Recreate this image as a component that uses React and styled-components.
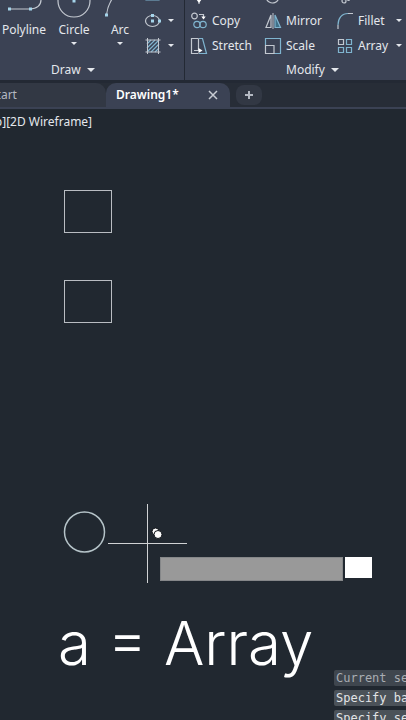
import React, { useState } from 'react'
import styled, { createGlobalStyle, ThemeProvider } from 'styled-components'

const theme = {
  colors: {
    ribbon: '#3b4254',
    ribbonEdge: '#232934',
    tabBar: '#272d37',
    tabIdle: '#323844',
    canvas: '#212830',
    text: '#e4e7ec',
    muted: '#b4b9c2',
    line: '#c3c8d0',
    accent: '#7fb4cf',
  },
  fonts: {
    ui: '"Noto Sans", "Open Sans", sans-serif',
    mono: '"DejaVu Sans Mono", monospace',
    caption: 'Inter, sans-serif',
  },
}

const GlobalStyle = createGlobalStyle`
  * {
    box-sizing: border-box;
  }

  body {
    margin: 0;
    background: #212830;
  }

  button, input {
    font: inherit;
    color: inherit;
    border: none;
    padding: 0;
    margin: 0;
    background: none;
  }

  svg {
    display: block;
    flex-shrink: 0;
  }
`

const Page = styled.div`
  display: flex;
  flex-direction: column;
  height: 100vh;
  overflow: hidden;
  background: ${props => props.theme.colors.canvas};
  color: ${props => props.theme.colors.text};
  font-family: ${props => props.theme.fonts.ui};
  font-size: 12px;
  line-height: 18px;
`

const Ribbon = styled.header`
  display: flex;
  flex-shrink: 0;
  background: ${props => props.theme.colors.ribbon};
  border-bottom: 3px solid ${props => props.theme.colors.ribbonEdge};
`

const Panel = styled.section`
  display: flex;
  flex-direction: column;
  flex: ${props => (props.$grow ? '1 0 221px' : '0 0 185px')};
  border-right: ${props => (props.$grow ? 0 : 1)}px solid ${props => props.theme.colors.ribbonEdge};
`

const PanelBody = styled.div`
  display: flex;
  align-items: flex-end;
  height: 58px;
  overflow: hidden;
`

const PanelTitle = styled.button`
  display: flex;
  align-items: center;
  gap: 6px;
  height: 22px;
  padding: 2px 0 0 ${props => props.$indent}px;
`

const Caret = styled.span`
  border: ${props => (props.$small ? 3 : 4)}px solid transparent;
  border-top-color: ${props => props.theme.colors.text};
  border-bottom: none;
`

const BigTool = styled.button`
  display: flex;
  flex-direction: column;
  align-items: center;
  gap: 3px;
  flex: 0 0 ${props => props.$width}px;
  height: 74px;
`

const ToolColumn = styled.div`
  display: flex;
  flex-direction: column;
  padding-left: 4px;
`

const ToolGrid = styled.div`
  display: grid;
  grid-template-columns: 74px 72px 66px;
  padding-left: 5px;
`

const SmallTool = styled.button`
  display: flex;
  align-items: center;
  gap: ${props => props.$gap || 4}px;
  height: 25px;
  white-space: nowrap;
`

const ToolName = styled.span`
  flex: 1;
  text-align: left;
`

const TabBar = styled.nav`
  display: flex;
  align-items: flex-end;
  flex-shrink: 0;
  height: 26px;
  overflow: hidden;
  background: ${props => props.theme.colors.tabBar};
  border-bottom: 2px solid ${props => props.theme.colors.ribbon};
`

const StartTab = styled.button`
  flex: 0 0 136px;
  height: 24px;
  margin-left: -30px;
  padding-left: 20px;
  text-align: left;
  color: ${props => props.theme.colors.muted};
  background: ${props => props.theme.colors.tabIdle};
  border-radius: 0 10px 0 0;
`

const ActiveTab = styled.div`
  display: flex;
  align-items: center;
  justify-content: space-between;
  flex: 0 0 124px;
  height: 24px;
  padding: 0 12px 0 10px;
  background: ${props => props.theme.colors.ribbon};
  border-radius: 10px 10px 0 0;
`

const TabName = styled.button`
  color: #fff;
  font-weight: 600;
`

const AddTab = styled.button`
  display: flex;
  align-items: center;
  justify-content: center;
  width: 26px;
  height: 20px;
  margin: 0 0 2px 6px;
  background: ${props => props.theme.colors.tabIdle};
  border-radius: 8px;
`

const Canvas = styled.main`
  position: relative;
  flex: 1;
  overflow: hidden;
`

const ViewControls = styled.div`
  margin: 4px 0 0 -34px;
`

const Drawing = styled.svg`
  position: absolute;
  left: 0;
  top: 0;
`

const DynamicInput = styled.div`
  position: absolute;
  left: 160px;
  top: 448px;
  display: flex;
  gap: 2px;
`

const Prompt = styled.input`
  width: 183px;
  height: 24px;
  padding: 0 4px;
  background: #999;
  border: 1px solid #858789;
`

const Entry = styled.input`
  width: 27px;
  height: 21px;
  padding: 0 4px;
  color: #111;
  background: #fff;
`

const Caption = styled.h1`
  position: absolute;
  left: 58px;
  top: 499px;
  margin: 0;
  font-family: ${props => props.theme.fonts.caption};
  font-size: 60px;
  font-weight: 300;
  line-height: 70px;
  color: #fff;
  white-space: nowrap;
`

const History = styled.div`
  position: absolute;
  left: 334px;
  top: 561px;
  display: flex;
  flex-direction: column;
  gap: 4px;
  font-family: ${props => props.theme.fonts.mono};
  line-height: 16px;
  white-space: nowrap;
`

const HistoryLine = styled.span`
  padding: 0 2px;
  color: ${props => (props.$faded ? '#a9adb2' : '#e2e4e6')};
  background: ${props => (props.$faded ? '#3f464e' : '#4b5259')};
  border-radius: 2px;
`

const Stroke = ({ w, h, children }) => (
  <svg width={w} height={h} viewBox={`0 0 ${w} ${h}`} fill="none" stroke={theme.colors.line} strokeWidth="1.2" aria-hidden="true">
    {children}
  </svg>
)

const c = theme.colors.accent
const Dot = ({ x, y }) => <rect x={x - 1.5} y={y - 1.5} width="3" height="3" fill="#a5d4ea" stroke="none" />

const icons = {
  polyline: (
    <Stroke w={48} h={34}>
      <path d="M9 25h21c7 0 11-4 11-9s-4-8-10-8H20" />
      <Dot x={9.5} y={25} />
      <Dot x={30.5} y={25} />
    </Stroke>
  ),
  circle: (
    <Stroke w={34} h={34}>
      <circle cx="17" cy="17" r="16" />
      <Dot x={17} y={17} />
    </Stroke>
  ),
  arc: (
    <Stroke w={34} h={34}>
      <path d="M3.5 31C4 25 6 20 9 15c4-7 10-11 20-12" />
      <Dot x={3.5} y={31} />
      <Dot x={9} y={13} />
    </Stroke>
  ),
  rectangle: (
    <Stroke w={18} h={18}>
      <path d="M2 3h13v10H2z" stroke={c} />
    </Stroke>
  ),
  ellipse: (
    <Stroke w={18} h={18}>
      <ellipse cx="8.5" cy="9" rx="7" ry="5.5" />
      <Dot x={8.5} y={3.5} />
      <Dot x={15.5} y={9} />
      <Dot x={8.5} y={9} />
    </Stroke>
  ),
  hatch: (
    <Stroke w={18} h={18}>
      <path d="M3 15L15 3M3 11l8-8M3 7l4-4M7 15l8-8M11 15l4-4" stroke={c} />
      <path d="M3.5 1v16M14.5 1v16M1.5 3h15M1.5 15h15" strokeWidth="1" />
    </Stroke>
  ),
  move: (
    <Stroke w={18} h={18}>
      <path d="M9 1v16M1 9h16" />
      <path d="M6 12h6l-3 4z" fill="#fff" stroke="none" />
    </Stroke>
  ),
  rotate: (
    <Stroke w={18} h={18}>
      <path d="M14 6a6.5 6.5 0 1 1-5-3" />
    </Stroke>
  ),
  trim: (
    <Stroke w={18} h={18}>
      <path d="M15 2L8 13M6 2l7 11" />
      <circle cx="8" cy="14" r="2" />
      <circle cx="12.5" cy="12.5" r="1" />
    </Stroke>
  ),
  copy: (
    <Stroke w={18} h={18}>
      <circle cx="4.5" cy="4" r="2.8" />
      <path d="M9 2.5h4.5V6" />
      <path d="M11.3 4.5h4.4l-2.2 3z" fill="#fff" stroke="none" />
      <circle cx="7" cy="12.5" r="3.2" stroke={c} />
      <circle cx="13" cy="12.5" r="3.2" stroke={c} />
    </Stroke>
  ),
  mirror: (
    <Stroke w={18} h={18}>
      <path d="M7 3v12.5H2z" />
      <path d="M11 3v12.5h5.5z" fill="#3f7088" stroke={c} />
      <path d="M9 1v16" strokeWidth="1" />
    </Stroke>
  ),
  fillet: (
    <Stroke w={18} h={18}>
      <path d="M2 17v-4M12 1.5h5" />
      <path d="M2 13C2 6 6 1.5 12 1.5" stroke={c} />
    </Stroke>
  ),
  stretch: (
    <Stroke w={18} h={18}>
      <path d="M8.5 1.5h-7v15h7" />
      <path d="M8.5 1.5v12M4 13.5h6" />
      <path d="M9 1.5h3.500l4 15H9" stroke={c} />
      <path d="M8.5 11l4 2.5-4 2.5z" fill="#fff" stroke="none" />
    </Stroke>
  ),
  scale: (
    <Stroke w={18} h={18}>
      <path d="M1.5 8V1.5h15v15H10" stroke={c} />
      <path d="M1.5 8.5H10v8H1.5z" />
    </Stroke>
  ),
  array: (
    <Stroke w={18} h={18}>
      <path d="M2.5 2.5h5v5h-5z" />
      <path d="M10.5 2.5h5v5h-5zM2.5 10.5h5v5h-5zM10.5 10.5h5v5h-5z" stroke={c} />
    </Stroke>
  ),
}

const drawTools = [
  { name: 'Polyline', icon: 'polyline', width: 48 },
  { name: 'Circle', icon: 'circle', width: 52, menu: true },
  { name: 'Arc', icon: 'arc', width: 40, menu: true },
]

const shapeTools = [
  { label: 'Rectangle', icon: 'rectangle' },
  { label: 'Ellipse', icon: 'ellipse' },
  { label: 'Hatch', icon: 'hatch' },
]

const modifyTools = [
  { label: 'Move', icon: 'move' },
  { label: 'Rotate', icon: 'rotate' },
  { label: 'Trim', icon: 'trim' },
  { name: 'Copy', icon: 'copy' },
  { name: 'Mirror', icon: 'mirror' },
  { name: 'Fillet', icon: 'fillet', menu: true },
  { name: 'Stretch', icon: 'stretch' },
  { name: 'Scale', icon: 'scale' },
  { name: 'Array', icon: 'array', menu: true },
]

const App = () => {
  const [prompt, setPrompt] = useState('')
  const [entry, setEntry] = useState('')

  return (
    <ThemeProvider theme={theme}>
      <GlobalStyle />
      <Page>
        <Ribbon>
          <Panel>
            <PanelBody>
              {drawTools.map(tool => (
                <BigTool key={tool.name} $width={tool.width}>
                  {icons[tool.icon]}
                  <span>{tool.name}</span>
                  {tool.menu && <Caret $small />}
                </BigTool>
              ))}
              <ToolColumn>
                {shapeTools.map(tool => (
                  <SmallTool key={tool.label} aria-label={tool.label} $gap={6}>
                    {icons[tool.icon]}
                    <Caret $small />
                  </SmallTool>
                ))}
              </ToolColumn>
            </PanelBody>
            <PanelTitle $indent={51}>
              Draw <Caret />
            </PanelTitle>
          </Panel>

          <Panel $grow>
            <PanelBody>
              <ToolGrid>
                {modifyTools.map(tool => (
                  <SmallTool key={tool.icon} aria-label={tool.label}>
                    {icons[tool.icon]}
                    {tool.name && <ToolName>{tool.name}</ToolName>}
                    {tool.menu && <Caret $small />}
                  </SmallTool>
                ))}
              </ToolGrid>
            </PanelBody>
            <PanelTitle $indent={101}>
              Modify <Caret />
            </PanelTitle>
          </Panel>
        </Ribbon>

        <TabBar>
          <StartTab>Start</StartTab>
          <ActiveTab>
            <TabName>Drawing1*</TabName>
            <button aria-label="Close drawing">
              <svg width="10" height="10" viewBox="0 0 10 10" stroke="#c9cdd4" strokeWidth="1.5">
                <path d="M1 1l8 8M9 1L1 9" />
              </svg>
            </button>
          </ActiveTab>
          <AddTab aria-label="New drawing">
            <svg width="10" height="10" viewBox="0 0 10 10" stroke="#b4b9c2" strokeWidth="2">
              <path d="M5 1v8M1 5h8" />
            </svg>
          </AddTab>
        </TabBar>

        <Canvas>
          <ViewControls>[-][Top][2D Wireframe]</ViewControls>

          <Drawing width="100%" height="100%" fill="none" stroke="#b9bdc2">
            <rect x="64.5" y="81.5" width="47" height="42" />
            <rect x="64.5" y="171.5" width="47" height="42" />
            <circle cx="84.5" cy="423" r="20" stroke="#b5c3c8" strokeWidth="1.5" />
            <path d="M147.5 395v79M108 434.5h79" stroke="#d0d2d4" />
            <g fill="#fff" stroke="#11151a">
              <circle cx="155.5" cy="422.5" r="3.5" />
              <circle cx="158" cy="425.5" r="4" />
            </g>
          </Drawing>

          <DynamicInput>
            <Prompt aria-label="Prompt" value={prompt} onChange={e => setPrompt(e.target.value)} />
            <Entry aria-label="Command" value={entry} onChange={e => setEntry(e.target.value)} />
          </DynamicInput>

          <Caption>a = Array</Caption>

          <History>
            <HistoryLine $faded>Current settings:</HistoryLine>
            <HistoryLine>Specify base point</HistoryLine>
            <HistoryLine>Specify second point</HistoryLine>
          </History>
        </Canvas>
      </Page>
    </ThemeProvider>
  )
}

export default App
